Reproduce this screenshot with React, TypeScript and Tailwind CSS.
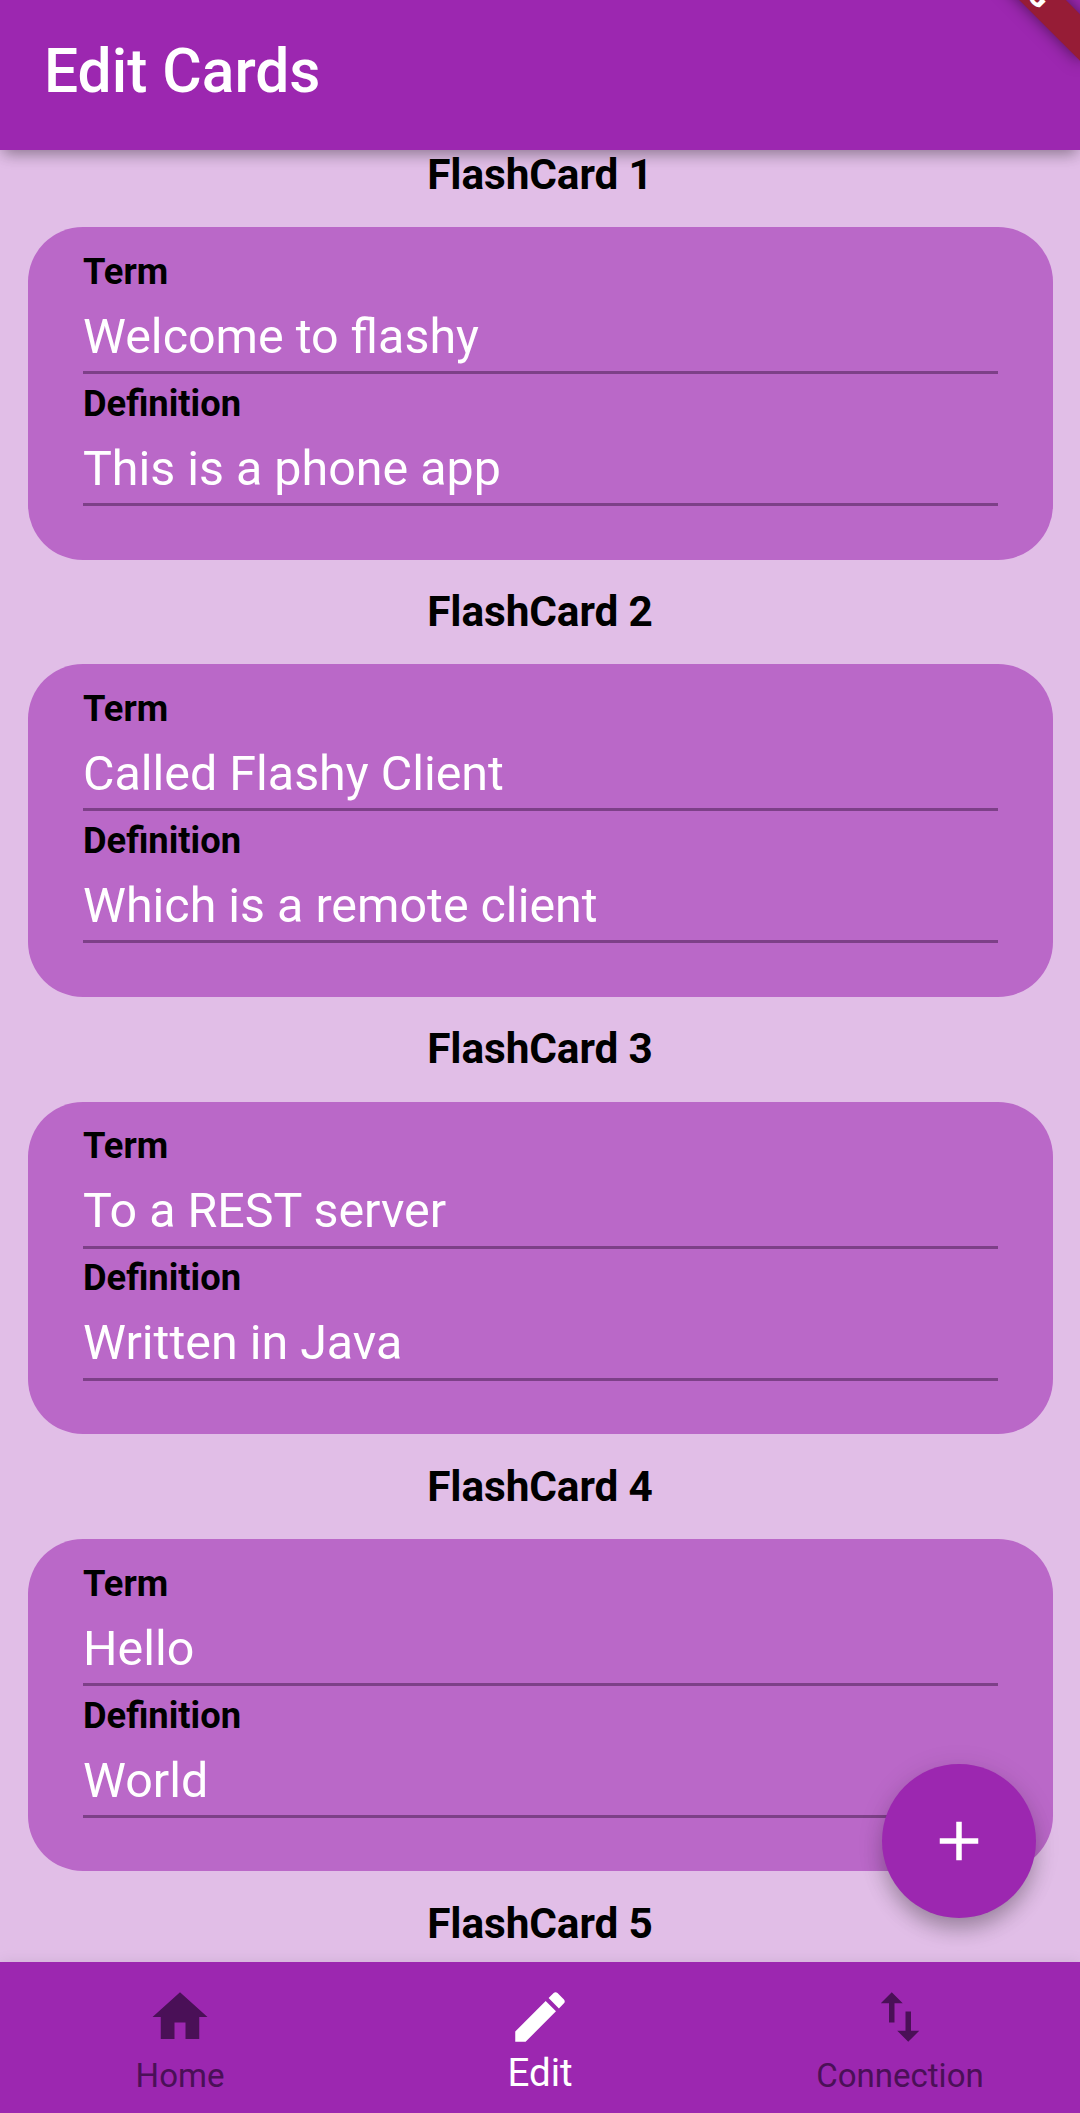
const cards = [
  { term: 'Welcome to flashy', definition: 'This is a phone app' },
  { term: 'Called Flashy Client', definition: 'Which is a remote client' },
  { term: 'To a REST server', definition: 'Written in Java' },
  { term: 'Hello', definition: 'World' },
];

const HOME = 'M10 20v-6h4v6h5v-8h3L12 3 2 12h3v8z';
const EDIT =
  'M3 17.25V21h3.75L17.81 9.94l-3.75-3.75L3 17.25zM20.71 7.04c.39-.39.39-1.02 0-1.41l-2.34-2.34c-.39-.39-1.02-.39-1.41 0l-1.83 1.83 3.75 3.75 1.83-1.83z';
const IMPORT_EXPORT =
  'M9 3L5 6.99h3V14h2V6.99h3L9 3zm7 14.01V10h-2v7.01h-3L15 21l4-3.99h-3z';
const ADD = 'M19 13h-6v6h-2v-6H5v-2h6V5h2v6h6v2z';

function Icon({ d }: { d: string }) {
  return (
    <svg viewBox="0 0 24 24" className="size-[66px] shrink-0 fill-current">
      <path d={d} />
    </svg>
  );
}

function CardTitle({ n }: { n: number }) {
  return (
    <h2 className="flex h-[104.9px] items-center justify-center text-[42.35px] leading-[50px] font-bold tracking-[-0.1px] text-black">
      FlashCard {n}
    </h2>
  );
}

function Field({ label, value }: { label: string; value: string }) {
  return (
    <div className="flex h-[132px] flex-col border-b-3 border-[#7d4088] pt-[7.5px]">
      <div className="h-[43px] pl-[0.5px] text-[36.3px] leading-[43px] font-bold text-black">{label}</div>
      <div className="pt-[15px] pl-[0.5px] text-[48.4px] leading-[57px] text-white">{value}</div>
    </div>
  );
}

function NavItem({ icon, label, active }: { icon: string; label: string; active?: boolean }) {
  return (
    <button
      className={
        active
          ? 'flex flex-1 flex-col items-center pt-[22px] text-white'
          : 'flex flex-1 flex-col items-center pt-[22px] text-[#4a1057]'
      }
    >
      <Icon d={icon} />
      <span
        className={
          active ? 'text-[38.5px] leading-[46px]' : 'pt-[6px] text-[33px] leading-[40px]'
        }
      >
        {label}
      </span>
    </button>
  );
}

export default function App() {
  return (
    <div className="relative flex h-[2113px] w-[1080px] flex-col overflow-hidden bg-[#e1bee7] font-['Roboto',sans-serif]">
      <header className="relative z-10 flex h-[150px] shrink-0 items-center bg-[#9c27b0] pb-[7px] pl-[44px] shadow-[0_8px_14px_-4px_rgba(0,0,0,0.32),0_3px_16px_0_rgba(0,0,0,0.08)]">
        <h1 className="text-[60.5px] leading-[70px] font-medium text-white">Edit Cards</h1>
      </header>

      <main className="min-h-0 flex-1 overflow-hidden px-[27.5px]">
        <div className="-mt-[27.7px]">
          {cards.map((card, i) => (
            <section key={card.term}>
              <CardTitle n={i + 1} />
              <div className="h-[332.4px] rounded-[55px] bg-[#ba68c8] px-[55px] pt-[15px]">
                <Field label="Term" value={card.term} />
                <Field label="Definition" value={card.definition} />
              </div>
            </section>
          ))}
          <CardTitle n={5} />
        </div>
      </main>

      <nav className="flex h-[151px] shrink-0 bg-[#9c27b0] shadow-[0_0_14px_rgba(0,0,0,0.08)]">
        <NavItem icon={HOME} label="Home" />
        <NavItem icon={EDIT} label="Edit" active />
        <NavItem icon={IMPORT_EXPORT} label="Connection" />
      </nav>

      <button className="absolute right-[44px] bottom-[195px] flex size-[154px] items-center justify-center rounded-full bg-[#9c27b0] text-white shadow-[0_14px_22px_-4px_rgba(0,0,0,0.28),0_4px_28px_0_rgba(0,0,0,0.10)]">
        <Icon d={ADD} />
      </button>

      <div className="absolute top-[-45px] right-[-44px] z-20 flex h-[33px] w-[220px] rotate-45 items-center justify-center bg-[#961c36] text-[28px] leading-[33px] font-black text-white shadow-[0_0_16px_rgba(0,0,0,0.5)]">
        DEBUG
      </div>
    </div>
  );
}
